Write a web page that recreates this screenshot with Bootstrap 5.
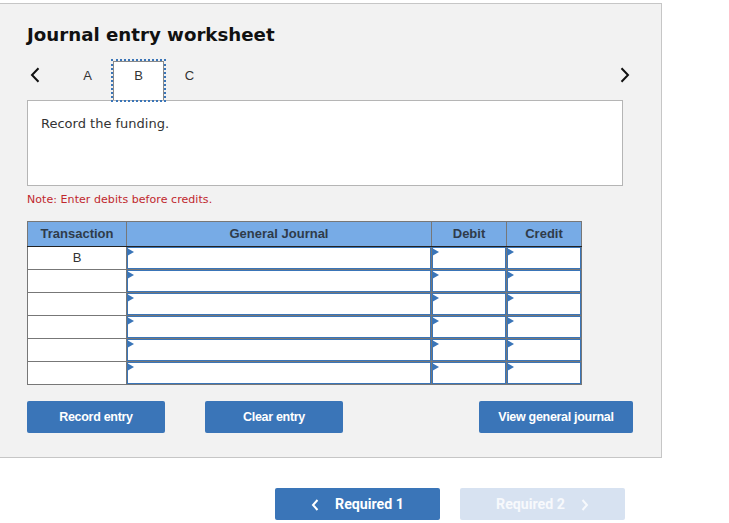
<!DOCTYPE html>
<html lang="en">
<head>
<meta charset="utf-8">
<title>Journal entry worksheet</title>
<link href="https://cdn.jsdelivr.net/npm/bootstrap@5.3.0/dist/css/bootstrap.min.css" rel="stylesheet">
<style>
body{background:#fff;font-family:"Liberation Sans",Arial,sans-serif;color:#222;overflow:hidden}
.sheet{margin-top:3px;width:662px;height:455px;background:#f2f2f2;border:1px solid #c6c6c6;border-left:0;padding:0 0 0 27px}
.sheet-title{font-family:"DejaVu Sans",sans-serif;font-weight:700;font-size:18.2px;line-height:24px;color:#111;margin:19px 0 0}
.tabbar{height:39px;margin-top:14px;width:596px}
.chev-btn{width:35px;height:27px;padding-left:3px}
.chev-btn.next-chev{width:20px;margin-right:-7px;padding-left:0}
.chev-btn svg{display:block}
.tab-item{width:51px;height:39px;font-size:13px;color:#333;line-height:30px;text-align:center}
.tab-item.active-tab{background:#fff;border:1px solid #8a8a8a;border-bottom:0;outline:2px dotted #3a75b8;line-height:28px;position:relative;z-index:1}
.prompt{width:596px;height:86px;background:#fff;border:1px solid #b5b5b5;font-family:"DejaVu Sans",sans-serif;font-size:13px;color:#333;padding:14px 13px;line-height:18px}
.note{font-family:"DejaVu Sans",sans-serif;font-size:11px;line-height:14px;color:#c0272d;margin:7px 0 14px;letter-spacing:.06px}
.jtable{table-layout:fixed;border-collapse:collapse;width:554px;background:#fff}
.jtable th{background:#77abe6;border:1px solid #777;border-bottom:1px solid #222;border-left-color:#222;font-size:13px;font-weight:700;color:#2f3b4a;text-align:center;height:25px;padding:0;line-height:22px}
.jtable th:first-child{border-left-color:#777}
.jtable td{height:23px;padding:0;border:1px solid #777;font-size:13px;text-align:center;line-height:20px;color:#333}
.jtable td.entry{position:relative}
.entry-box{position:absolute;inset:0;border:1px solid #3a75b8;background:#fff}
.entry-box::before{content:"";position:absolute;left:-1px;top:0;border-left:7px solid #3a75b8;border-top:4px solid transparent;border-bottom:4px solid transparent}
.act-row{width:606px;margin-top:16px}
.act-btn{background:#3a75b8;color:#fff;font-weight:700;font-size:12.5px;letter-spacing:-.3px;height:32px;border:0;border-radius:2px;padding:0;width:138px}
.act-btn.wide{width:154px}
.gap-mid{margin-left:40px}
.req-row{margin:30px 0 0 275px;gap:20px}
.req-btn{width:165px;height:32px;background:#3a75b8;color:#fff;border:0;border-radius:2px;font-family:Roboto,sans-serif;font-weight:700;font-size:14.2px;padding:1px 0 0;gap:16px}
.req-btn.off{background:#d7e2f1;color:#f7f9fc}
</style>
</head>
<body>
<div class="sheet">
  <h1 class="sheet-title">Journal entry worksheet</h1>
  <div class="tabbar d-flex align-items-start">
    <div class="chev-btn d-flex align-items-center">
      <svg width="10" height="16" viewBox="0 0 10 16"><path d="M8.5 1.2 2 8l6.5 6.8" fill="none" stroke="#111" stroke-width="2"/></svg>
    </div>
    <div class="d-flex tab-group">
      <div class="tab-item">A</div>
      <div class="tab-item active-tab">B</div>
      <div class="tab-item">C</div>
    </div>
    <div class="ms-auto chev-btn next-chev d-flex align-items-center justify-content-end">
      <svg width="10" height="16" viewBox="0 0 10 16"><path d="M1.5 1.2 8 8l-6.5 6.8" fill="none" stroke="#111" stroke-width="2"/></svg>
    </div>
  </div>
  <div class="prompt">Record the funding.</div>
  <p class="note">Note: Enter debits before credits.</p>
  <table class="jtable">
    <colgroup><col style="width:99px"><col style="width:305px"><col style="width:75px"><col style="width:75px"></colgroup>
    <thead><tr><th>Transaction</th><th>General Journal</th><th>Debit</th><th>Credit</th></tr></thead>
    <tbody>
      <tr><td>B</td><td class="entry"><div class="entry-box"></div></td><td class="entry"><div class="entry-box"></div></td><td class="entry"><div class="entry-box"></div></td></tr>
      <tr><td></td><td class="entry"><div class="entry-box"></div></td><td class="entry"><div class="entry-box"></div></td><td class="entry"><div class="entry-box"></div></td></tr>
      <tr><td></td><td class="entry"><div class="entry-box"></div></td><td class="entry"><div class="entry-box"></div></td><td class="entry"><div class="entry-box"></div></td></tr>
      <tr><td></td><td class="entry"><div class="entry-box"></div></td><td class="entry"><div class="entry-box"></div></td><td class="entry"><div class="entry-box"></div></td></tr>
      <tr><td></td><td class="entry"><div class="entry-box"></div></td><td class="entry"><div class="entry-box"></div></td><td class="entry"><div class="entry-box"></div></td></tr>
      <tr><td></td><td class="entry"><div class="entry-box"></div></td><td class="entry"><div class="entry-box"></div></td><td class="entry"><div class="entry-box"></div></td></tr>
    </tbody>
  </table>
  <div class="act-row d-flex">
    <button type="button" class="btn act-btn">Record entry</button>
    <button type="button" class="btn act-btn gap-mid">Clear entry</button>
    <button type="button" class="btn act-btn wide ms-auto">View general journal</button>
  </div>
</div>
<div class="req-row d-flex">
  <button type="button" class="btn req-btn d-flex align-items-center justify-content-center">
    <svg width="8" height="12" viewBox="0 0 8 12"><path d="M6.5 1 2 6l4.5 5" fill="none" stroke="#fff" stroke-width="2"/></svg>Required 1</button>
  <button type="button" class="btn req-btn off d-flex align-items-center justify-content-center">Required 2
    <svg width="8" height="12" viewBox="0 0 8 12"><path d="M1.5 1 6 6l-4.5 5" fill="none" stroke="#f7f9fc" stroke-width="2"/></svg></button>
</div>
<script src="https://cdn.jsdelivr.net/npm/bootstrap@5.3.0/dist/js/bootstrap.bundle.min.js"></script>
</body>
</html>
